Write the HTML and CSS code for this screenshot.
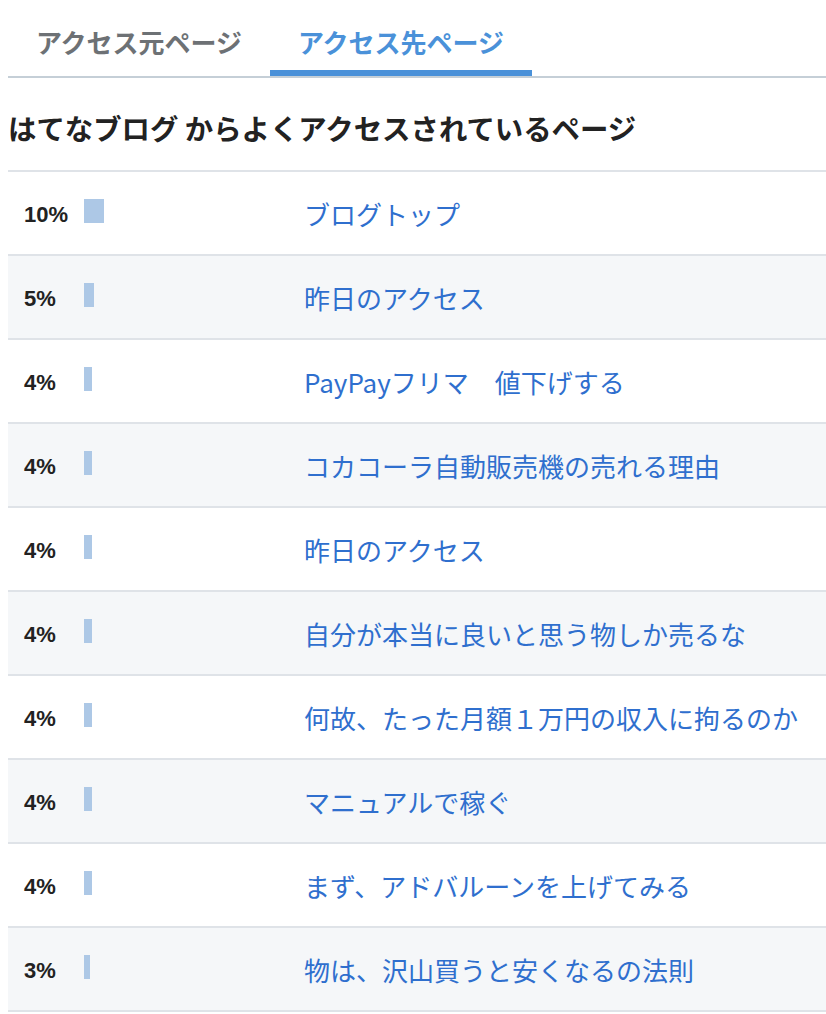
FILE: index.html
```html
<!DOCTYPE html>
<html lang="ja">
<head>
    <meta charset="UTF-8">
    <meta name="viewport" content="width=device-width, initial-scale=1.0">
    <title>アクセス解析</title>
    <link rel="stylesheet" href="styles.css">
</head>
<body>
    <div id="wrapper">
        <div class="tabs">
            <div class="tab">アクセス元ページ</div>
            <div class="tab active">アクセス先ページ</div>
        </div>
        <h2 class="title">はてなブログ からよくアクセスされているページ</h2>
        <div class="ranking">
            <div class="row">
                <span class="pct">10%</span>
                <span class="barCell"><span class="bar" style="width:20px"></span></span>
                <a class="link" href="#">ブログトップ</a>
            </div>
            <div class="row">
                <span class="pct">5%</span>
                <span class="barCell"><span class="bar" style="width:10px"></span></span>
                <a class="link" href="#">昨日のアクセス</a>
            </div>
            <div class="row">
                <span class="pct">4%</span>
                <span class="barCell"><span class="bar" style="width:8px"></span></span>
                <a class="link" href="#">PayPayフリマ　値下げする</a>
            </div>
            <div class="row">
                <span class="pct">4%</span>
                <span class="barCell"><span class="bar" style="width:8px"></span></span>
                <a class="link" href="#">コカコーラ自動販売機の売れる理由</a>
            </div>
            <div class="row">
                <span class="pct">4%</span>
                <span class="barCell"><span class="bar" style="width:8px"></span></span>
                <a class="link" href="#">昨日のアクセス</a>
            </div>
            <div class="row">
                <span class="pct">4%</span>
                <span class="barCell"><span class="bar" style="width:8px"></span></span>
                <a class="link" href="#">自分が本当に良いと思う物しか売るな</a>
            </div>
            <div class="row">
                <span class="pct">4%</span>
                <span class="barCell"><span class="bar" style="width:8px"></span></span>
                <a class="link" href="#">何故、たった月額１万円の収入に拘るのか</a>
            </div>
            <div class="row">
                <span class="pct">4%</span>
                <span class="barCell"><span class="bar" style="width:8px"></span></span>
                <a class="link" href="#">マニュアルで稼ぐ</a>
            </div>
            <div class="row">
                <span class="pct">4%</span>
                <span class="barCell"><span class="bar" style="width:8px"></span></span>
                <a class="link" href="#">まず、アドバルーンを上げてみる</a>
            </div>
            <div class="row">
                <span class="pct">3%</span>
                <span class="barCell"><span class="bar" style="width:6px"></span></span>
                <a class="link" href="#">物は、沢山買うと安くなるの法則</a>
            </div>
        </div>
    </div>
</body>
</html>
```

FILE: styles.css
```css
body{
    margin: 8px 0 0 8px;
    font-family: "Noto Sans CJK JP", "Noto Sans", sans-serif;
    color: #222;
    background-color: white;
}
.tabs{
    display: flex;
    border-bottom: 2px solid #c5cfd7;
}
.tab{
    width: 262px;
    text-align: center;
    font-size: 26px;
    font-weight: bold;
    line-height: 40px;
    padding-top: 14px;
    padding-bottom: 8px;
    border-bottom: 6px solid transparent;
    color: #6d7175;
}
.tab.active{
    color: #4a91d9;
    border-bottom-color: #4a91d9;
}
.title{
    font-size: 28.4px;
    font-weight: bold;
    line-height: 40px;
    margin: 30px 0 22px 0;
    color: #222;
}
.ranking{
    border-bottom: 2px solid #dfe3e8;
}
.row{
    display: flex;
    align-items: center;
    height: 82px;
    border-top: 2px solid #dfe3e8;
    padding-left: 16px;
}
.row:nth-child(even){
    background-color: #f5f7f9;
}
.pct{
    width: 60px;
    font-family: "Liberation Sans", Arial, sans-serif;
    font-size: 22px;
    font-weight: bold;
    color: #222;
    padding-top: 4px;
}
.barCell{
    width: 220px;
    display: flex;
}
.bar{
    height: 24px;
    background-color: #adc8e6;
    margin-top: -4px;
}
.link{
    font-size: 26px;
    color: #2f6fce;
    text-decoration: none;
}
```
